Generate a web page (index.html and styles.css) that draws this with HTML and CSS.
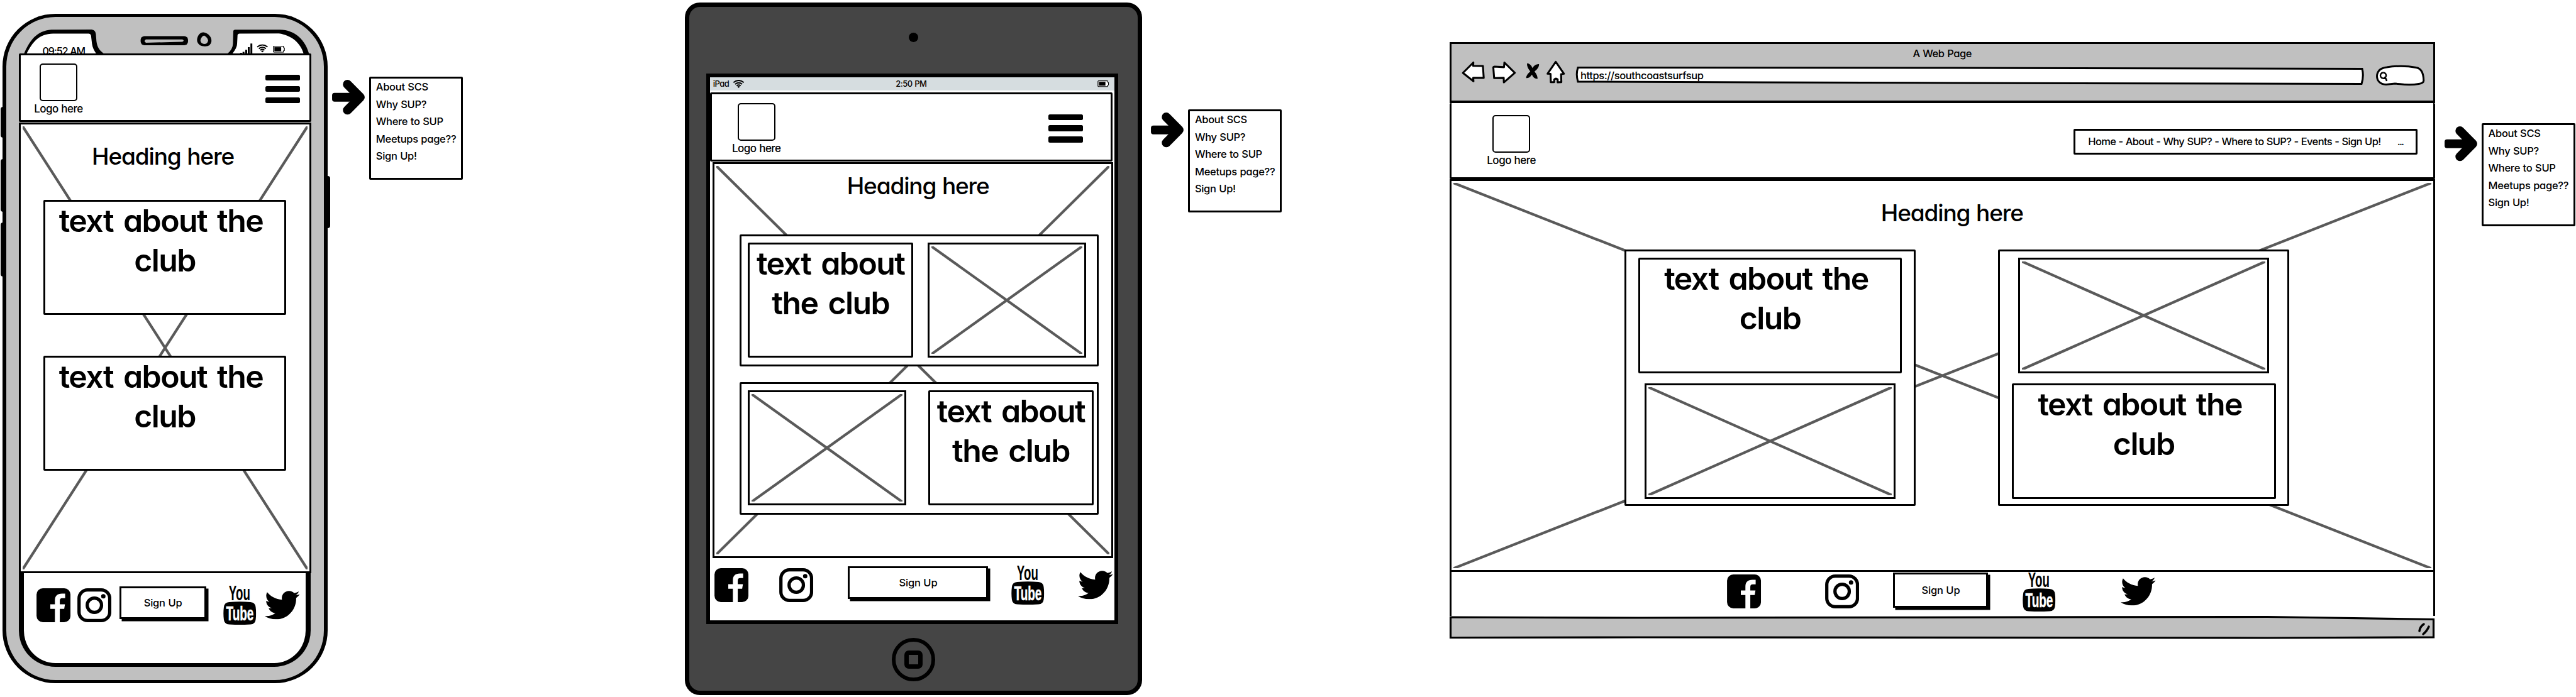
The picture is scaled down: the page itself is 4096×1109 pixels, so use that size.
FILE: index.html
```html
<!DOCTYPE html>
<html lang="en">
<head>
<meta charset="utf-8">
<title>Homepage wireframes</title>
<link rel="stylesheet" href="styles.css">
</head>
<body>
<svg class="defs" aria-hidden="true">
  <symbol id="facebook" viewBox="0 0 54 54"><rect width="54" height="54" rx="10"/><path fill="#fff" d="M29.2 54V32.7H21.9V25.5H29.2V19.5C29.2 12 33 8.5 40.5 8.5H45.5V15.7H41C38 15.7 37 17 37 20V25.5H45.2L44 32.7H37V54Z"/></symbol>
  <symbol id="instagram" viewBox="0 0 54 54"><rect x="2.6" y="2.6" width="48.8" height="48.8" rx="13.5" fill="none" stroke="#000" stroke-width="5.2"/><circle cx="27" cy="27" r="11.4" fill="none" stroke="#000" stroke-width="5.2"/><circle cx="41.2" cy="12.7" r="3.5"/></symbol>
  <symbol id="youtube" viewBox="0 0 52 63"><text class="yt" x="8.6" y="24" font-size="33" textLength="34" lengthAdjust="spacingAndGlyphs">You</text><path d="M9 27Q26 25.600 43 27Q50.500 27.500 51.300 35Q52.600 45 51.300 55Q50.500 62 43 62.600Q26 63.600 9 62.600Q1.500 62 .7 55Q-.6 45 .7 35Q1.500 27.500 9 27Z"/><text class="yt" fill="#fff" stroke="#fff" x="4.200" y="56" font-size="32" textLength="44" lengthAdjust="spacingAndGlyphs">Tube</text></symbol>
  <symbol id="twitter" viewBox="0 48 512 416"><path d="M459.37 151.716c.325 4.548.325 9.097.325 13.645 0 138.72-105.583 298.558-298.558 298.558-59.452 0-114.68-17.219-161.137-47.106 8.447.974 16.568 1.299 25.34 1.299 49.055 0 94.213-16.568 130.274-44.832-46.132-.975-84.792-31.188-98.112-72.772 6.498.974 12.995 1.624 19.818 1.624 9.421 0 18.843-1.3 27.614-3.573-48.081-9.747-84.143-51.98-84.143-102.985v-1.299c13.969 7.797 30.214 12.67 47.431 13.319-28.264-18.843-46.781-51.005-46.781-87.391 0-19.492 5.197-37.36 14.294-52.954 51.655 63.675 129.3 105.258 216.365 109.807-1.624-7.797-2.599-15.918-2.599-24.04 0-57.828 46.782-104.934 104.934-104.934 30.213 0 57.502 12.67 76.67 33.137 23.715-4.548 46.456-13.32 66.599-25.34-7.798 24.366-24.366 44.833-46.132 57.827 21.117-2.273 41.584-8.122 60.426-16.243-14.292 20.791-32.161 39.308-52.628 54.253z"/></symbol>
  <symbol id="arrow" viewBox="83 100 238 254"><path fill="none" stroke="#000" stroke-width="66" stroke-linecap="round" stroke-linejoin="round" d="M195 133L288 227L195 321"/><rect x="83" y="195" width="200" height="64" rx="18"/></symbol>
  <symbol id="wifi" viewBox="0 0 18 13"><g fill="none" stroke="#000" stroke-width="2"><path d="M.8 4.300Q9-2.300 17.200 4.300"/><path d="M3.400 7Q9 2.600 14.600 7"/><path d="M5.800 9.500Q9 7 12.200 9.500"/></g><path d="M6.900 10.800Q9 9.300 11.100 10.800L9 13Z"/></symbol>
  <symbol id="battery" viewBox="0 0 19 11"><path fill="#fff" stroke="#000" stroke-width="1.200" d="M1.600.7H16.500L17 3L18.200 3.500V7.500L17 8L16.500 10.300H1.600L.7 9.500V1.500Z"/><rect x="2.300" y="2.300" width="10.800" height="6.400"/></symbol>
</svg>

<main class="board">

  <section class="phone">
    <i class="key key-l1"></i><i class="key key-l2"></i><i class="key key-l3"></i><i class="key key-r"></i>
    <div class="phone-shell">
      <div class="phone-top">
        <svg class="notch" viewBox="30 40 465 46">
          <path d="M38 86C47 65 58 49 81.500 47.300L145.700 47Q151.600 47.500 152.400 54L153 61C153.500 72 156 79 166 86Z"/>
          <path fill="#fff" d="M42 86C52 66 62 54 84.400 53.400H141.300Q144.500 54 144.800 57L146.300 69.700Q147.500 78 153.500 86Z"/>
          <path d="M361 86Q370 79 370.400 69.700L371 49Q371.500 47.300 374 47.300H444.800C470 47.500 486 65 491.500 86Z"/>
          <path fill="#fff" d="M369 86Q377 76 377 69.700L377.700 56Q378 53.500 381 53.400L443.400 53.300C463 56 478 68 483 86Z"/>
          <rect x="223.600" y="57.500" width="75.400" height="14.600" rx="6"/>
          <path fill="#c0c0c0" d="M232 62.700H290Q294 64.500 290 66.400L270 67L232 68Q228 65 232 62.700Z"/>
          <path d="M324 51.600C332 53 337 60 336.200 66Q335 74 326 73.800Q316 74 313.500 66C312.500 59 317 51 324 51.600Z"/>
          <path fill="#c0c0c0" d="M324.500 56.500Q330.500 60 330.900 64.500Q330 70 324.500 70Q318.700 69 318.700 64Q320 58 324.500 56.500Z"/>
          <path d="M381.800 84h3v2h-3zM385.700 82.500h3v4h-3zM390 79.300h3v7h-3zM394 75h3v11h-3zM398.200 69.300h3v17h-3z"/>
          <use href="#wifi" x="408.200" y="70.400" width="18" height="13"/>
          <use href="#battery" x="434" y="72.800" width="19" height="11"/>
        </svg>
        <span class="phone-time t">09:52 AM</span>
      </div>
      <header class="site-head head-phone">
        <div class="logo"><div class="logo-box"></div><span class="t">Logo here</span></div>
        <div class="burger"><i></i><i></i><i></i></div>
      </header>
      <section class="hero hero-phone">
        <svg class="cross"><line x1="0" y1="0" x2="100%" y2="100%"/><line x1="100%" y1="0" x2="0" y2="100%"/></svg>
        <h1><span class="t">Heading here</span></h1>
        <div class="card"><p class="nudge"><span class="t">text about the</span></p><p><span class="t">club</span></p></div>
        <div class="card"><p class="nudge"><span class="t">text about the</span></p><p><span class="t">club</span></p></div>
      </section>
      <footer class="phone-base">
        <svg class="social"><use href="#facebook"/></svg>
        <svg class="social insta"><use href="#instagram"/></svg>
        <div class="btn"><span class="t">Sign Up</span></div>
        <svg class="social tube"><use href="#youtube"/></svg>
        <svg class="social bird"><use href="#twitter"/></svg>
      </footer>
    </div>
  </section>

  <aside class="callout callout-phone">
    <svg class="arrow"><use href="#arrow"/></svg>
    <ul class="menu"><li><span class="t">About SCS</span></li><li><span class="t">Why SUP?</span></li><li><span class="t">Where to SUP</span></li><li><span class="t">Meetups page??</span></li><li><span class="t">Sign Up!</span></li></ul>
  </aside>

  <section class="tablet">
    <div class="lens"></div>
    <div class="tablet-screen">
      <div class="status">
        <span class="status-left"><span class="t">iPad</span><svg class="wifi"><use href="#wifi"/></svg></span>
        <span class="t">2:50 PM</span>
        <span class="status-right"><svg class="battery"><use href="#battery"/></svg></span>
      </div>
      <header class="site-head head-tablet">
        <div class="logo"><div class="logo-box"></div><span class="t">Logo here</span></div>
        <div class="burger"><i></i><i></i><i></i></div>
      </header>
      <section class="hero hero-tablet">
        <svg class="cross"><line x1="0" y1="0" x2="100%" y2="100%"/><line x1="100%" y1="0" x2="0" y2="100%"/></svg>
        <h1><span class="t">Heading here</span></h1>
        <div class="group">
          <div class="card"><p><span class="t">text about</span></p><p><span class="t">the club</span></p></div>
          <div class="image"><svg class="cross"><line x1="0" y1="0" x2="100%" y2="100%"/><line x1="100%" y1="0" x2="0" y2="100%"/></svg></div>
        </div>
        <div class="group flip">
          <div class="image"><svg class="cross"><line x1="0" y1="0" x2="100%" y2="100%"/><line x1="100%" y1="0" x2="0" y2="100%"/></svg></div>
          <div class="card"><p><span class="t">text about</span></p><p><span class="t">the club</span></p></div>
        </div>
      </section>
      <footer class="tablet-foot">
        <svg class="social"><use href="#facebook"/></svg>
        <svg class="social insta"><use href="#instagram"/></svg>
        <div class="btn"><span class="t">Sign Up</span></div>
        <svg class="social tube"><use href="#youtube"/></svg>
        <svg class="social bird"><use href="#twitter"/></svg>
      </footer>
    </div>
    <div class="home"><i></i></div>
  </section>

  <aside class="callout callout-tablet">
    <svg class="arrow"><use href="#arrow"/></svg>
    <ul class="menu"><li><span class="t">About SCS</span></li><li><span class="t">Why SUP?</span></li><li><span class="t">Where to SUP</span></li><li><span class="t">Meetups page??</span></li><li><span class="t">Sign Up!</span></li></ul>
  </aside>

  <section class="browser">
    <div class="chrome">
      <div class="chrome-title"><span class="t">A Web Page</span></div>
      <div class="toolbar">
        <svg class="nav-icons" viewBox="70 140 770 175">
          <g fill="#fff" stroke="#000" stroke-width="14" stroke-linejoin="round">
            <path d="M84 232L160 156L159 180L230 181L236 268L159 268L161 293Z"/>
            <path d="M306 192Q307 186 316 186L384 190L387 156L463 231L383 301L382 268L312 270Z"/>
            <path d="M762 151L822 238L801 241L803 299L776 301V280Q763 268 751 280V299L726 300L724 239L702 238Z"/>
          </g>
          <path d="M552 162Q578 163 592 196Q610 166 640 168Q642 195 607 222Q630 250 629 276Q600 274 588 244Q570 272 546 270Q546 246 576 222Q550 190 552 162Z"/>
        </svg>
        <div class="url">
          <svg class="url-line" viewBox="0 0 1254 29" preserveAspectRatio="none"><path d="M4 1.500L600 2L1251 3.500Q1254 15 1250 27.500L600 26L4 24Q.5 12 4 1.500Z"/></svg>
          <span class="t">https://southcoastsurfsup</span>
        </div>
        <svg class="search" viewBox="0 0 77.400 32.700">
          <path fill="#fff" stroke="#000" stroke-width="3" d="M16 30.500C6 30 1.500 24 1.500 17C2 8 9 4 17 3C33 .5 50 .8 64 3.500C73 5 75.500 14 75.800 24Q76 28 68 29.500C50 33 40 29.500 30 29Z"/>
          <path fill="none" stroke="#000" stroke-width="2.400" d="M11.500 11.500a4.600 4.600 0 1 0 .1 0M13 19Q16 20 17 25"/>
        </svg>
      </div>
    </div>
    <header class="site-head head-web">
      <div class="logo"><div class="logo-box"></div><span class="t">Logo here</span></div>
      <nav class="links"><span class="t">Home - About - Why SUP? - Where to SUP? - Events - Sign Up!</span><span class="t more">...</span></nav>
    </header>
    <section class="hero hero-web">
      <svg class="cross"><line x1="0" y1="0" x2="100%" y2="100%"/><line x1="100%" y1="0" x2="0" y2="100%"/></svg>
      <h1><span class="t">Heading here</span></h1>
      <div class="columns">
        <div class="column">
          <div class="card"><p class="nudge"><span class="t">text about the</span></p><p><span class="t">club</span></p></div>
          <div class="image"><svg class="cross"><line x1="0" y1="0" x2="100%" y2="100%"/><line x1="100%" y1="0" x2="0" y2="100%"/></svg></div>
        </div>
        <div class="column right">
          <div class="image"><svg class="cross"><line x1="0" y1="0" x2="100%" y2="100%"/><line x1="100%" y1="0" x2="0" y2="100%"/></svg></div>
          <div class="card"><p class="nudge"><span class="t">text about the</span></p><p><span class="t">club</span></p></div>
        </div>
      </div>
    </section>
    <footer class="web-foot">
      <svg class="social"><use href="#facebook"/></svg>
      <svg class="social insta"><use href="#instagram"/></svg>
      <div class="btn"><span class="t">Sign Up</span></div>
      <svg class="social tube"><use href="#youtube"/></svg>
      <svg class="social bird"><use href="#twitter"/></svg>
    </footer>
    <svg class="web-base" viewBox="0 0 1566 37">
      <path d="M1.500 2L300 3L1300 1.500L1564.500 5.500V34L1300 35L300 34L1.500 34.500Z"/>
      <g class="grip"><path d="M1542 24Q1543 17 1549 13"/><path d="M1548 29Q1554 24 1557 17"/></g>
    </svg>
  </section>

  <aside class="callout callout-web">
    <svg class="arrow"><use href="#arrow"/></svg>
    <ul class="menu"><li><span class="t">About SCS</span></li><li><span class="t">Why SUP?</span></li><li><span class="t">Where to SUP</span></li><li><span class="t">Meetups page??</span></li><li><span class="t">Sign Up!</span></li></ul>
  </aside>
</main>
</body>
</html>
```
FILE: styles.css
```css
* { box-sizing: border-box; }

body {
  margin: 0;
  background: #fff;
  color: #000;
  font-family: Inter, "Noto Sans", sans-serif;
  font-feature-settings: "cv11" 1;
  font-size: 16.5px;
  font-weight: 500;
  letter-spacing: -.4px;
  word-spacing: .5px;
}

h1, p, ul { margin: 0; padding: 0; font-weight: inherit; }
svg { display: block; flex: none; overflow: visible; }
.defs { position: absolute; width: 0; height: 0; }
.t { white-space: pre; }
.yt { font-family: "Liberation Sans", sans-serif; font-weight: 700; letter-spacing: 0; stroke-width: .5px; }

.board { position: relative; width: 4096px; height: 1109px; overflow: hidden; }

/* shared wireframe parts */
.site-head {
  position: relative;
  display: flex;
  justify-content: space-between;
  align-items: flex-start;
  border: 3px solid #000;
  border-radius: 2px;
  background: #fff;
}
.logo { display: flex; flex-direction: column; align-items: center; width: 90px; line-height: 24px; font-size: 17px; letter-spacing: -.5px; }
.logo-box { width: 60.500px; height: 60px; border: 2.500px solid #000; border-radius: 5px; background: #fff; }
.burger { display: flex; flex-direction: column; gap: 8.400px; }
.burger i { width: 55px; height: 9.400px; border-radius: 2.500px; background: #000; }

.hero { position: relative; border: 3px solid #000; background: #fff; display: flex; flex-direction: column; align-items: center; }
.hero > * { position: relative; }
.hero h1 { font-size: 37px; line-height: 46px; margin-bottom: -2px; letter-spacing: -1.150px; word-spacing: 1px; }
.cross, .hero > .cross { position: absolute; left: 3px; top: 3px; width: calc(100% - 6px); height: calc(100% - 6px); overflow: hidden; }
.cross line { stroke: #5a5a5a; stroke-width: 4.200; }
.card { border: 3px solid #000; border-radius: 2px; background: #fff; text-align: center; font-size: 50px; line-height: 62.700px; font-weight: 600; letter-spacing: -1.600px; word-spacing: 5px; }
.card p:first-child { margin-top: -1px; }
.card .nudge { padding-right: 12px; }
.image { position: relative; border: 3px solid #000; background: #fff; }

.social { width: 54.200px; height: 54px; }
.tube { width: 52.500px; height: 63px; }
.bird { width: 55.600px; height: 45.500px; }
.btn { display: flex; align-items: center; justify-content: center; height: 52px; border: 3px solid #000; background: #fff; box-shadow: 3.500px 3.500px 0 #000; letter-spacing: -.2px; }

.callout { position: absolute; display: flex; align-items: flex-start; }
.arrow { width: 52px; height: 55.400px; margin-top: 4.500px; }
.menu { width: 149px; height: 163.500px; margin-left: 7.500px; padding-left: 7.500px; border: 3px solid #000; border-radius: 2px; background: #fff; list-style: none; line-height: 27.500px; letter-spacing: -.3px; }
.callout-phone { left: 527.800px; top: 122px; }
.callout-tablet { left: 1829.900px; top: 174px; }
.callout-web { left: 3886.600px; top: 196px; }

/* phone */
.phone { position: absolute; left: 3.500px; top: 21.600px; width: 517.500px; height: 1065.400px; }
.phone-shell { position: relative; height: 100%; padding: 0 19.500px 0 20px; border: 6.500px solid #000; border-top-width: 5px; border-bottom-width: 5px; border-radius: 84px; background: #c0c0c0; }
.key { position: absolute; background: #000; border-radius: 4px; }
.key-l1 { left: -3px; top: 148.400px; width: 9px; height: 48.700px; }
.key-l2 { left: -3px; top: 231.800px; width: 9px; height: 84px; }
.key-l3 { left: -3px; top: 332.800px; width: 9px; height: 86px; }
.key-r { left: 511px; top: 258.400px; width: 10px; height: 83px; }
.phone-top { position: relative; height: 58.400px; padding-top: 13.400px; }
.notch { width: 465px; height: 46px; }
.phone-time { position: absolute; left: 38px; top: 42px; line-height: 24px; font-size: 16px; font-weight: 500; letter-spacing: -1px; }
.head-phone { height: 109px; width: 465px; padding: 13px 15px 0 15.500px; }
.head-phone .burger, .head-tablet .burger { margin-top: 18px; }
.hero-phone { width: 465px; height: 717px; margin-top: 1.300px; padding-top: 28px; }
.hero-phone .card { width: 385.800px; height: 183px; }
.hero-phone h1 + .card { margin-top: 48px; }
.hero-phone .card + .card { margin-top: 65px; }
.hero-phone h1 { left: -3px; }
.phone-base { display: flex; align-items: flex-start; width: 464px; height: 149.200px; padding: 23.500px 0 0 20.500px; border: 8px solid #000; border-top: 0; border-bottom-width: 6px; border-radius: 0 0 58px 58px; background: #fff; }
.phone-base .insta { margin-left: 11px; }
.phone-base .btn { width: 138.500px; margin: -3px 0 0 12.500px; }
.phone-base .tube { margin: -4.500px 0 0 27px; }
.phone-base .bird { margin: 4.200px 0 0 13px; }

/* tablet */
.tablet { position: absolute; left: 1088.900px; top: 3.900px; width: 727.300px; height: 1102.300px; padding-left: 27.400px; border: 7px solid #000; border-radius: 24px; background: #454545; }
.lens { width: 14.500px; height: 14.800px; margin: 41.600px 0 49.700px 322px; border-radius: 50%; background: #000; }
.tablet-screen { width: 654.700px; height: 876px; border: 6.200px solid #000; background: #fff; }
.status { display: grid; grid-template-columns: 1fr auto 1fr; align-items: center; height: 20.900px; padding: 0 8px 0 4.500px; background: #d6dde0; font-size: 13px; letter-spacing: -.5px; }
.status-left { display: flex; align-items: center; gap: 6px; }
.wifi { width: 19px; height: 13px; }
.status-right { display: flex; justify-content: flex-end; }
.battery { width: 18.500px; height: 10.500px; }
.head-tablet { width: 640.500px; height: 110px; margin: 2.700px 0 0 -.5px; padding: 14px 44px 0 26px; }
.hero-tablet { width: 637px; height: 630.200px; margin: 1.300px 0 0 3.400px; padding-top: 12.500px; }
.hero-tablet h1 { left: 8.500px; }
.group { display: flex; justify-content: space-between; width: 571.500px; height: 210.700px; padding: 10.200px 17.500px 0 10.200px; border: 3px solid #000; border-radius: 2px; background: #fff; left: 10.300px; }
.hero-tablet h1 + .group { margin-top: 55.300px; }
.group + .group { margin-top: 25px; }
.group.flip { padding: 9.500px 5px 0 10.200px; }
.group .card { width: 263.500px; height: 183.500px; }
.group .image { width: 251.700px; height: 183.500px; }
.tablet-foot { display: flex; align-items: flex-start; padding: 15.800px 0 0 6.300px; }
.tablet-foot .insta { margin-left: 49px; }
.tablet-foot .btn { width: 223px; margin: -3px 0 0 55.500px; }
.tablet-foot .tube { margin: -4.500px 0 0 36.500px; }
.tablet-foot .bird { margin: 4.200px 0 0 53.500px; }
.home { display: flex; align-items: center; justify-content: center; width: 68.500px; height: 68.500px; margin: 22.500px 0 0 295px; border: 6.500px solid #000; border-radius: 50%; }
.home i { width: 28.500px; height: 29px; border: 7px solid #000; border-radius: 7px; }

/* browser window */
.browser { position: absolute; left: 2304.800px; top: 67.200px; width: 1567px; }
.chrome { height: 97.100px; border: 3px solid #000; border-bottom-width: 4px; background: #c0c0c0; padding-top: 4.600px; }
.chrome-title { height: 20px; line-height: 20px; text-align: center; }
.toolbar { display: flex; align-items: flex-start; padding: 1px 0 0 15px; }
.nav-icons { width: 167.800px; height: 38.100px; }
.url { position: relative; width: 1254px; height: 29px; margin: 10.700px 0 0 14.300px; padding-left: 8px; line-height: 28px; }
.url-line { position: absolute; left: 0; top: 0; width: 100%; height: 100%; fill: #fff; stroke: #000; stroke-width: 3; }
.url .t { position: relative; }
.search { width: 77.400px; height: 32.700px; margin: 8px 0 0 19px; }
.head-web { height: 121px; margin-top: -.5px; padding: 16px 24.500px 0 50.300px; border-top: 0; }
.head-web .logo-box { margin-top: 3px; }
.links { display: flex; justify-content: space-between; width: 547px; height: 41.300px; margin-top: 25px; padding: 0 20px 0 20px; border: 3px solid #000; border-radius: 2px; line-height: 34px; letter-spacing: -.65px; }
.links .more { letter-spacing: -1.800px; }
.hero-web { height: 625.500px; padding-top: 28.500px; }
.hero-web h1 { left: 15.500px; }
.columns { display: flex; align-items: flex-start; justify-content: space-between; width: 1056.700px; margin-top: 37px; left: 23.300px; }
.column { display: flex; flex-direction: column; align-items: center; gap: 16.300px; width: 462.500px; height: 407.300px; padding-top: 10px; border: 3px solid #000; border-radius: 2px; background: #fff; }
.column .card { width: 419.700px; height: 183.900px; }
.column .image { width: 399.200px; height: 183.900px; }
.web-foot { display: flex; align-items: center; height: 70px; padding: 0 0 8.500px 438.200px; border: solid #000; border-width: 0 3px; background: #fff; }
.web-foot .insta { margin-left: 101.800px; }
.web-foot .btn { width: 151px; height: 56px; margin: -3.500px 0 0 54.300px; }
.web-foot .tube { margin-left: 55px; }
.web-foot .bird { margin-left: 103.400px; }
.web-base { width: 1566px; height: 37px; fill: #c0c0c0; stroke: #000; stroke-width: 3.200; }
.grip { fill: none; stroke-width: 3.500; stroke-linecap: round; }
```
